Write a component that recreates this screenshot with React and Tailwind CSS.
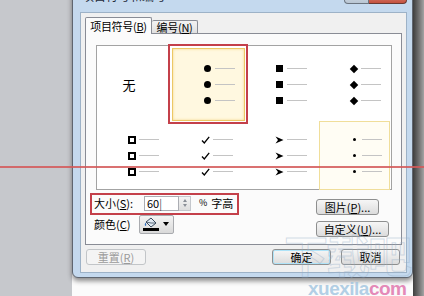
import { Fragment } from "react";

const Line = () => <div className="ml-[3px] w-[20px] h-px bg-[#c4c4c4]" />;

const Dot = () => <div className="w-[7px] h-[7px] rounded-full bg-black" />;
const Square = () => <div className="w-[7px] h-[7px] bg-black" />;
const Diamond = () => <div className="w-[6px] h-[6px] bg-black rotate-45" />;
const Hollow = () => <div className="w-[8px] h-[8px] border-2 border-black" />;
const SmallDot = () => <div className="w-[3px] h-[3px] rounded-full bg-black" />;
const Check = () => (
  <svg width="9" height="8" viewBox="0 0 9 8">
    <path d="M1 4.5 L3.3 7 L8.2 0.8" fill="none" stroke="#000" strokeWidth="1.3" />
  </svg>
);
const Arrow = () => (
  <svg width="9" height="8" viewBox="0 0 9 8">
    <path d="M0.5 0.5 L8.5 4 L0.5 7.5 L3 4 Z" fill="#000" />
  </svg>
);

const BulletCell = ({ glyph: Glyph, className = "" }) => (
  <div className={"flex flex-col justify-center pl-[30px] " + className}>
    {[0, 1, 2].map((i) => (
      <div key={i} className="flex items-center h-[16px]">
        <div className="w-[9px] flex justify-center">
          <Glyph />
        </div>
        <Line />
      </div>
    ))}
  </div>
);

const Btn = ({ children, className = "" }) => (
  <div
    className={
      "h-[16px] flex items-center justify-center rounded-[3px] border border-[#8e8f8f] bg-gradient-to-b from-[#f6f6f6] to-[#dcdcdc] text-[11px] leading-none " +
      className
    }
  >
    {children}
  </div>
);

export default function App() {
  return (
    <div className="relative w-[424px] h-[296px] overflow-hidden flex bg-[#fbfbfb] font-['Noto_Sans_CJK_SC',sans-serif] text-[12px] text-black">
      <div className="w-[72px] shrink-0 bg-[#c6c8cc]" />

      <div className="w-[341px] shrink-0 flex flex-col">
        <div className="-mt-[12px] h-[290px] flex flex-col bg-[#c4d9ee] border border-[#5f6670] rounded-b-[6px] pl-[7px] pr-[5px] pb-[4px] shadow-[0_3px_5px_rgba(0,0,0,0.45)]">
          {/* title bar */}
          <div className="h-[23px] shrink-0 flex justify-between items-start">
            <div className="pl-[2px] pt-0 text-[12px] leading-[14px] text-[#1e2a38]">项目符号和编号</div>
            <div className="flex">
              <div className="w-[25px] h-[15px] rounded-bl-[4px] border border-t-0 border-[#6b7580] bg-gradient-to-b from-[#dfe7ef] to-[#b9c6d3]" />
              <div className="w-[38px] h-[15px] rounded-br-[4px] border border-t-0 border-l-0 border-[#6b3a32] bg-gradient-to-b from-[#e5a296] to-[#c4513e]" />
            </div>
          </div>

          {/* client area */}
          <div className="flex-1 flex flex-col bg-[#f0f0f0] border border-[#9db2c7]">
            {/* tabs */}
            <div className="mt-[3px] ml-[4px] flex items-end h-[17px] relative z-10">
              <div className="w-[67px] h-[17px] -mb-px flex items-center justify-center bg-[#fbfbfb] border border-b-0 border-[#898c95] rounded-t-[2px] text-[11px] tracking-[-0.3px]">
                项目符号(<span className="underline">B</span>)
              </div>
              <div className="w-[46px] h-[13px] flex items-center justify-center bg-gradient-to-b from-[#f3f3f3] to-[#e0e0e0] border border-l-0 border-b-0 border-[#898c95] rounded-t-[2px] text-[11px] tracking-[-0.3px]">
                编号(<span className="underline">N</span>)
              </div>
            </div>

            {/* tab panel */}
            <div className="ml-[4px] w-[317px] h-[212px] border border-[#898c95] bg-[#fbfbfb] flex flex-col">
              <div className="ml-[10px] mt-[11px] w-[296px] h-[145px] border border-[#a3a3a3] bg-white pt-[2px] grid grid-cols-[74px_74px_74px_74px] grid-rows-[73px_69px]">
                <div className="flex items-center justify-center pr-[10px] text-[13px]">无</div>
                <BulletCell
                  glyph={Dot}
                  className="ml-px border-[1.5px] border-[#ecc865] bg-[#fff8e0] shadow-[inset_0_0_3px_#f3d88c] pl-[28px]"
                />
                <BulletCell glyph={Square} />
                <BulletCell glyph={Diamond} />
                <BulletCell glyph={Hollow} />
                <BulletCell glyph={Check} />
                <BulletCell glyph={Arrow} />
                <BulletCell
                  glyph={SmallDot}
                  className="mr-[3px] border-[1.5px] border-[#f0de9a] bg-[#fffdf4] pl-[28px]"
                />
              </div>

              <div className="flex mt-[2px]">
                <div className="flex flex-col pl-[8px]">
                  <div className="h-[22px] flex items-center text-[11px]">
                    <span className="w-[50px]">
                      大小(<span className="underline">S</span>):
                    </span>
                    <div className="w-[35px] h-[15px] bg-white border border-[#abadb3] flex items-center pl-[2px] text-[11px] leading-none">
                      60<span className="font-light">|</span>
                    </div>
                    <div className="w-[12px] h-[15px] flex flex-col items-center justify-center gap-[2px] border border-l-0 border-[#c4c7cc] bg-gradient-to-b from-[#f4f4f4] to-[#dedede]">
                      <div className="w-0 h-0 border-x-[2.5px] border-x-transparent border-b-[3px] border-b-[#8a8f96]" />
                      <div className="w-0 h-0 border-x-[2.5px] border-x-transparent border-t-[3px] border-t-[#8a8f96]" />
                    </div>
                    <span className="ml-[8px] text-[9px]">%</span>
                    <span className="ml-[4px]">字高</span>
                  </div>
                  <div className="h-[20px] flex items-center text-[11px]">
                    <span className="w-[45px]">
                      颜色(<span className="underline">C</span>)
                    </span>
                    <div className="w-[35px] h-[19px] flex items-center gap-[4px] pl-[3px] rounded-[2px] border border-[#a9abaf] bg-gradient-to-b from-[#f4f4f4] to-[#d9d9d9]">
                      <div className="flex flex-col items-center">
                        <svg width="16" height="11" viewBox="0 0 16 11">
                          <path d="M3 5 L8 1 L13 6 L8 10 Z" fill="#dfe8f2" stroke="#3a4b5e" strokeWidth="1" />
                          <path d="M3 5 L8 6 L13 6" fill="none" stroke="#3a4b5e" strokeWidth="0.8" />
                          <path d="M2.5 5.5 Q1 8 2.5 9 Q4 8 2.5 5.5" fill="#2f6fc0" />
                        </svg>
                        <div className="w-[16px] h-[3px] bg-black" />
                      </div>
                      <div className="w-0 h-0 border-x-[3px] border-x-transparent border-t-[4px] border-t-black" />
                    </div>
                  </div>
                </div>

                <div className="ml-auto mr-[12px] flex flex-col pt-[7px] gap-[6px]">
                  <Btn className="w-[63px]">
                    图片(<span className="underline">P</span>)...
                  </Btn>
                  <Btn className="w-[73px]">
                    自定义(<span className="underline">U</span>)...
                  </Btn>
                </div>
              </div>
            </div>

            {/* bottom buttons */}
            <div className="mt-[4px] flex items-center">
              <div className="ml-[5px] w-[60px] h-[16px] flex items-center justify-center rounded-[3px] border border-[#c2c5c8] bg-[#f4f4f4] text-[#9a9a9a] text-[11px]">
                重置(<span className="underline">R</span>)
              </div>
              <Btn className="ml-[126px] w-[59px] border-[#3c7fb1] shadow-[inset_0_0_0_1px_#aee3f8]">确定</Btn>
              <Btn className="ml-[10px] w-[59px]">取消</Btn>
            </div>
          </div>
        </div>
      </div>

      <div className="flex-1 bg-gradient-to-r from-[#3e3e3e] via-[#6e6e6e] to-[#a4a4a4]" />

      {/* annotations drawn over the screenshot */}
      <div className="absolute left-[168px] top-[44px] w-[80px] h-[80px] border-2 border-[#c4404a] pointer-events-none" />
      <div className="absolute left-[90px] top-[193px] w-[149px] h-[22px] border-2 border-[#c4404a] pointer-events-none" />
      <div className="absolute left-0 top-[166px] w-[424px] h-[2px] bg-[#d45858]/85 pointer-events-none" />

      {/* watermark */}
      <div className="absolute left-[284px] top-[232px] text-[44px] leading-none font-bold tracking-[-2px] text-transparent [-webkit-text-stroke:1px_rgba(150,175,200,0.4)] pointer-events-none">
        下载吧
      </div>
      <div className="absolute left-[308px] top-[279px] text-[19px] leading-none font-bold font-['Liberation_Sans',sans-serif] tracking-[-0.5px] pointer-events-none">
        <span className="text-[#9ec3df]/80">xuexila</span>
        <span className="text-[#e48ab8]">com</span>
      </div>
    </div>
  );
}
